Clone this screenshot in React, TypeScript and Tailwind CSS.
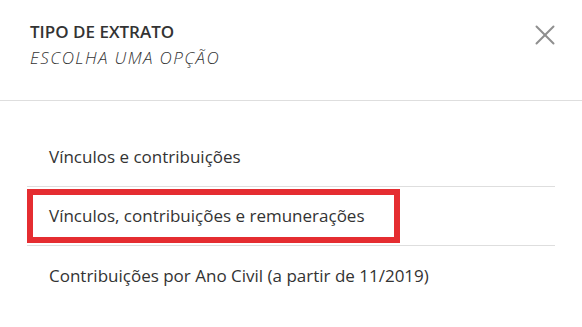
import { X } from 'lucide-react';

const options = [
    'Vínculos e contribuições',
    'Vínculos, contribuições e remunerações',
    'Contribuições por Ano Civil (a partir de 11/2019)',
];

export default function App() {
    return (
        <div className="w-[582px] h-[327px] bg-white text-[#333] overflow-hidden" style={{ fontFamily: '"Open Sans", Lato, sans-serif' }}>
            {/* Header */}
            <div className="h-[101px] border-b border-[#dedede] pl-[30px] pr-[20px] pt-[21px] flex justify-between items-start">
                <div>
                    <h2 className="text-[17px] font-semibold leading-[22px] uppercase">Tipo de extrato</h2>
                    <p className="text-[17px] italic font-light leading-[24px] mt-[3px] uppercase tracking-[1.4px]">Escolha uma opção</p>
                </div>
                <button className="text-[#8f8f8f] -mt-[3px]">
                    <X size={34} strokeWidth={1.4} />
                </button>
            </div>

            {/* Options */}
            <div className="mx-[27px] mt-[27px]">
                {options.map((label, i) => (
                    <div key={label} className={`h-[59px] flex items-center ${i < options.length - 1 ? 'border-b border-[#dedede]' : ''}`}>
                        {i === 1 ? (
                            <div className="h-[54px] border-[6px] border-[#e52d31] flex items-center pl-[16px] w-[373px]">
                                <span className="text-[17px]">{label}</span>
                            </div>
                        ) : (
                            <span className="pl-[22px] text-[17px]">{label}</span>
                        )}
                    </div>
                ))}
            </div>
        </div>
    );
}
